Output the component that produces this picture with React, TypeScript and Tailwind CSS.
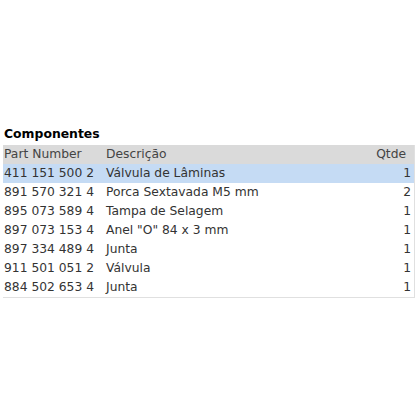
import React from "react";

const rows = [
  ["411 151 500 2", "Válvula de Lâminas", "1"],
  ["891 570 321 4", "Porca Sextavada M5 mm", "2"],
  ["895 073 589 4", "Tampa de Selagem", "1"],
  ["897 073 153 4", "Anel \"O\" 84 x 3 mm", "1"],
  ["897 334 489 4", "Junta", "1"],
  ["911 501 051 2", "Válvula", "1"],
  ["884 502 653 4", "Junta", "1"],
];

export default function App() {
  return (
    <div className="w-[420px] h-[420px] bg-white pt-[125px] pl-[3px] pr-[5px]" style={{ fontFamily: '"DejaVu Sans", Verdana, sans-serif' }}>
      <div className="text-[12.4px] font-bold text-black leading-[18px] pl-[1px] mb-[2px]">Componentes</div>
      <div className="border-b border-r border-[#e0e0e0]">
        <div className="flex bg-[#dadada] h-[19px] items-center text-[12.3px] text-[#444]">
          <div className="w-[103px] pl-[1px]">Part Number</div>
          <div className="flex-1">Descrição</div>
          <div className="pr-[8px]">Qtde</div>
        </div>
        {rows.map((r, i) => (
          <div key={i} className={`flex h-[19px] items-center text-[12.3px] text-[#333] ${i === 0 ? "bg-[#c5dbf4]" : ""}`}>
            <div className="w-[103px] pl-[1px]">{r[0]}</div>
            <div className="flex-1">{r[1]}</div>
            <div className="pr-[3px]">{r[2]}</div>
          </div>
        ))}
      </div>
    </div>
  );
}
